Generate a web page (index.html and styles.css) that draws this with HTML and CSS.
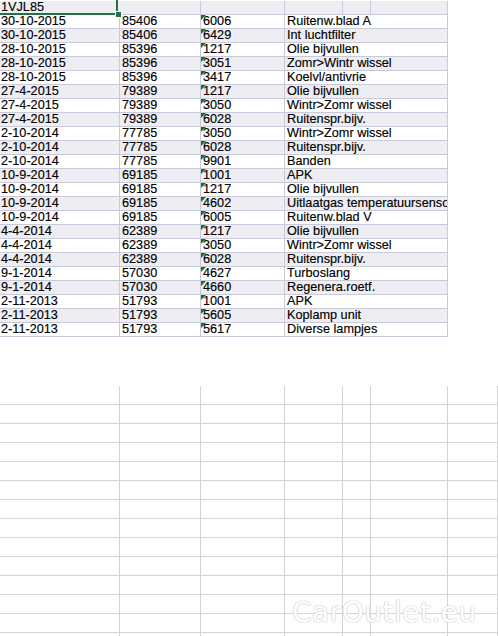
FILE: index.html
```html
<!DOCTYPE html>
<html>
<head>
<meta charset="utf-8">
<link rel="stylesheet" href="styles.css">
</head>
<body>
<div class="sheet">
  <div class="data">
    <div class="row head">
      <div class="c c1 sel">1VJL85<span class="handle"></span></div>
      <div class="c c2"></div>
      <div class="c c3"></div>
      <div class="c c4a"></div>
      <div class="c c4b"></div>
      <div class="c c4c"></div>
    </div>
    <div class="row"><div class="c c1">30-10-2015</div><div class="c c2">85406</div><div class="c c3 t">6006</div><div class="c c4">Ruitenw.blad A</div></div>
    <div class="row alt"><div class="c c1">30-10-2015</div><div class="c c2">85406</div><div class="c c3 t">6429</div><div class="c c4">Int luchtfilter</div></div>
    <div class="row"><div class="c c1">28-10-2015</div><div class="c c2">85396</div><div class="c c3 t">1217</div><div class="c c4">Olie bijvullen</div></div>
    <div class="row alt"><div class="c c1">28-10-2015</div><div class="c c2">85396</div><div class="c c3 t">3051</div><div class="c c4">Zomr&gt;Wintr wissel</div></div>
    <div class="row"><div class="c c1">28-10-2015</div><div class="c c2">85396</div><div class="c c3 t">3417</div><div class="c c4">Koelvl/antivrie</div></div>
    <div class="row alt"><div class="c c1">27-4-2015</div><div class="c c2">79389</div><div class="c c3 t">1217</div><div class="c c4">Olie bijvullen</div></div>
    <div class="row"><div class="c c1">27-4-2015</div><div class="c c2">79389</div><div class="c c3 t">3050</div><div class="c c4">Wintr&gt;Zomr wissel</div></div>
    <div class="row alt"><div class="c c1">27-4-2015</div><div class="c c2">79389</div><div class="c c3 t">6028</div><div class="c c4">Ruitenspr.bijv.</div></div>
    <div class="row"><div class="c c1">2-10-2014</div><div class="c c2">77785</div><div class="c c3 t">3050</div><div class="c c4">Wintr&gt;Zomr wissel</div></div>
    <div class="row alt"><div class="c c1">2-10-2014</div><div class="c c2">77785</div><div class="c c3 t">6028</div><div class="c c4">Ruitenspr.bijv.</div></div>
    <div class="row"><div class="c c1">2-10-2014</div><div class="c c2">77785</div><div class="c c3 t">9901</div><div class="c c4">Banden</div></div>
    <div class="row alt"><div class="c c1">10-9-2014</div><div class="c c2">69185</div><div class="c c3 t">1001</div><div class="c c4">APK</div></div>
    <div class="row"><div class="c c1">10-9-2014</div><div class="c c2">69185</div><div class="c c3 t">1217</div><div class="c c4">Olie bijvullen</div></div>
    <div class="row alt"><div class="c c1">10-9-2014</div><div class="c c2">69185</div><div class="c c3 t">4602</div><div class="c c4">Uitlaatgas temperatuursensor</div></div>
    <div class="row"><div class="c c1">10-9-2014</div><div class="c c2">69185</div><div class="c c3 t">6005</div><div class="c c4">Ruitenw.blad V</div></div>
    <div class="row alt"><div class="c c1">4-4-2014</div><div class="c c2">62389</div><div class="c c3 t">1217</div><div class="c c4">Olie bijvullen</div></div>
    <div class="row"><div class="c c1">4-4-2014</div><div class="c c2">62389</div><div class="c c3 t">3050</div><div class="c c4">Wintr&gt;Zomr wissel</div></div>
    <div class="row alt"><div class="c c1">4-4-2014</div><div class="c c2">62389</div><div class="c c3 t">6028</div><div class="c c4">Ruitenspr.bijv.</div></div>
    <div class="row"><div class="c c1">9-1-2014</div><div class="c c2">57030</div><div class="c c3 t">4627</div><div class="c c4">Turboslang</div></div>
    <div class="row alt"><div class="c c1">9-1-2014</div><div class="c c2">57030</div><div class="c c3 t">4660</div><div class="c c4">Regenera.roetf.</div></div>
    <div class="row"><div class="c c1">2-11-2013</div><div class="c c2">51793</div><div class="c c3 t">1001</div><div class="c c4">APK</div></div>
    <div class="row alt"><div class="c c1">2-11-2013</div><div class="c c2">51793</div><div class="c c3 t">5605</div><div class="c c4">Koplamp unit</div></div>
    <div class="row"><div class="c c1">2-11-2013</div><div class="c c2">51793</div><div class="c c3 t">5617</div><div class="c c4">Diverse lampjes</div></div>
  </div>

  <div class="grid" id="grid"></div>
</div>
<div class="watermark">CarOutlet.eu</div>
<script src="script.js"></script>
</body>
</html>
```

FILE: script.js
```js
var g = document.getElementById('grid');
for (var i = 0; i < 14 * 7; i++) {
  var d = document.createElement('div');
  d.className = 'g';
  g.appendChild(d);
}
```

FILE: styles.css
```css
html, body {
  margin: 0;
  padding: 0;
  background: #ffffff;
  width: 498px;
  height: 636px;
  overflow: hidden;
}

.sheet {
  position: relative;
  font-family: "Liberation Sans", Arial, sans-serif;
  font-size: 12.7px;
  color: #000000;
}

.data {
  width: 448px;
  padding-top: 1px;
}

.row {
  display: flex;
  height: 13px;
  border-bottom: 1px solid #c9c9dc;
  background: #ffffff;
}

.row.alt, .row.head {
  background: #ededf2;
}

.c {
  height: 13px;
  line-height: 13px;
  border-right: 1px solid #c9c9dc;
  white-space: nowrap;
  overflow: hidden;
  position: relative;
  box-sizing: content-box;
  -webkit-text-stroke: 0.15px #000;
}

.c1 { width: 118px; padding-left: 1px; }
.c2 { width: 78px; padding-left: 2px; }
.c3 { width: 81px; padding-left: 2px; }
.c4 { width: 160px; padding-left: 2px; }
.c4a { width: 57px; }
.c4b { width: 27px; }
.c4c { width: 76px; }

.t::before {
  content: "";
  position: absolute;
  left: 0;
  top: 0;
  width: 0;
  height: 0;
  border-top: 5px solid #0f7a0f;
  border-right: 5px solid transparent;
}

.sel {
  overflow: visible;
}

.sel::after {
  content: "";
  position: absolute;
  left: -3px;
  top: -3px;
  width: 121px;
  height: 17px;
  border: 2px solid #217346;
  box-sizing: border-box;
  pointer-events: none;
}

.head .sel {
  border-right-color: transparent;
}

.handle {
  position: absolute;
  left: 115px;
  top: 10px;
  width: 5px;
  height: 5px;
  background: #217346;
  border: 1px solid #ffffff;
  z-index: 2;
}

.grid {
  margin-top: 49px;
  display: grid;
  grid-template-columns: 120px 81px 84px 58px 28px 77px 1fr;
  grid-auto-rows: 19px;
}

.g {
  border-right: 1px solid #d4d4d4;
  border-bottom: 1px solid #d4d4d4;
}

.watermark {
  position: absolute;
  left: 292px;
  top: 596px;
  font-family: "DejaVu Sans", sans-serif;
  font-size: 28px;
  letter-spacing: 0.5px;
  color: #ffffff;
  text-shadow: 0 0 1px #c8c8c8, 0 0 1px #c8c8c8, 0 0 2px #d8d8d8;
}
```
